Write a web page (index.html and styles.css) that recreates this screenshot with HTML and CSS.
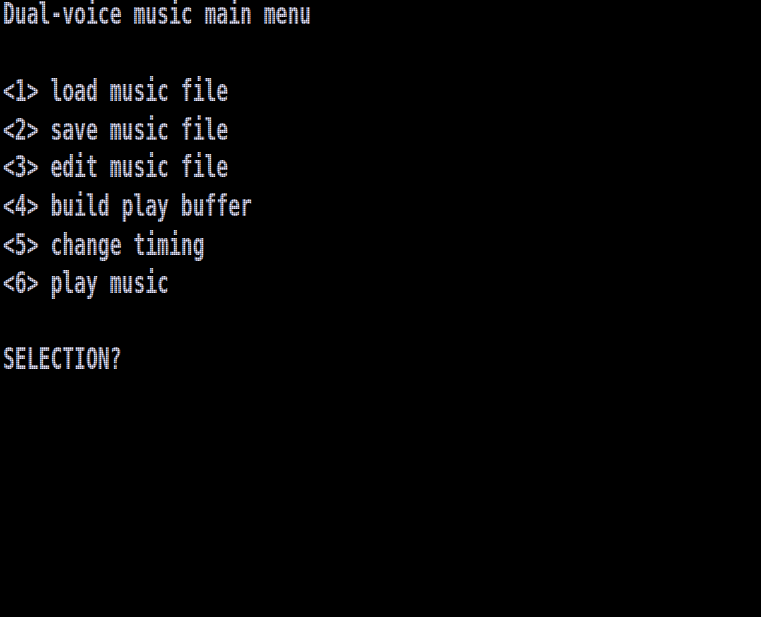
FILE: index.html
```html
<!DOCTYPE html>
<html>
<head>
<meta charset="utf-8">
<link rel="stylesheet" href="styles.css">
</head>
<body>
<div class="screen">
  <div class="text">
    <div class="line">Dual-voice music main menu</div>
    <div class="line"></div>
    <div class="line">&lt;1&gt; load music file</div>
    <div class="line">&lt;2&gt; save music file</div>
    <div class="line">&lt;3&gt; edit music file</div>
    <div class="line">&lt;4&gt; build play buffer</div>
    <div class="line">&lt;5&gt; change timing</div>
    <div class="line">&lt;6&gt; play music</div>
    <div class="line"></div>
    <div class="line">SELECTION?</div>
  </div>
</div>
</body>
</html>
```
FILE: styles.css
```css
html, body {
  margin: 0;
  padding: 0;
  background: #000;
}
.screen {
  position: relative;
  width: 761px;
  height: 617px;
  overflow: hidden;
  background: #000;
}
.text {
  display: flex;
  flex-direction: column;
  padding-left: 3px;
  transform: scaleY(1.5);
  transform-origin: 0 0;
  font-family: "DejaVu Sans Mono", monospace;
  font-weight: bold;
  font-size: 19.7px;
  color: #e6e6ff;
  white-space: pre;
}
.line {
  height: 25.6px;
  line-height: 25.6px;
  margin-top: -3px;
  margin-bottom: 3px;
}
.screen::after {
  content: "";
  position: absolute;
  inset: 0;
  background:
    repeating-linear-gradient(90deg, rgba(0,0,0,0) 0 1px, rgba(0,0,0,0.3) 1px 2px),
    repeating-linear-gradient(0deg, rgba(0,0,0,0) 0 1px, rgba(0,0,0,0.3) 1px 2px);
  pointer-events: none;
}
```
